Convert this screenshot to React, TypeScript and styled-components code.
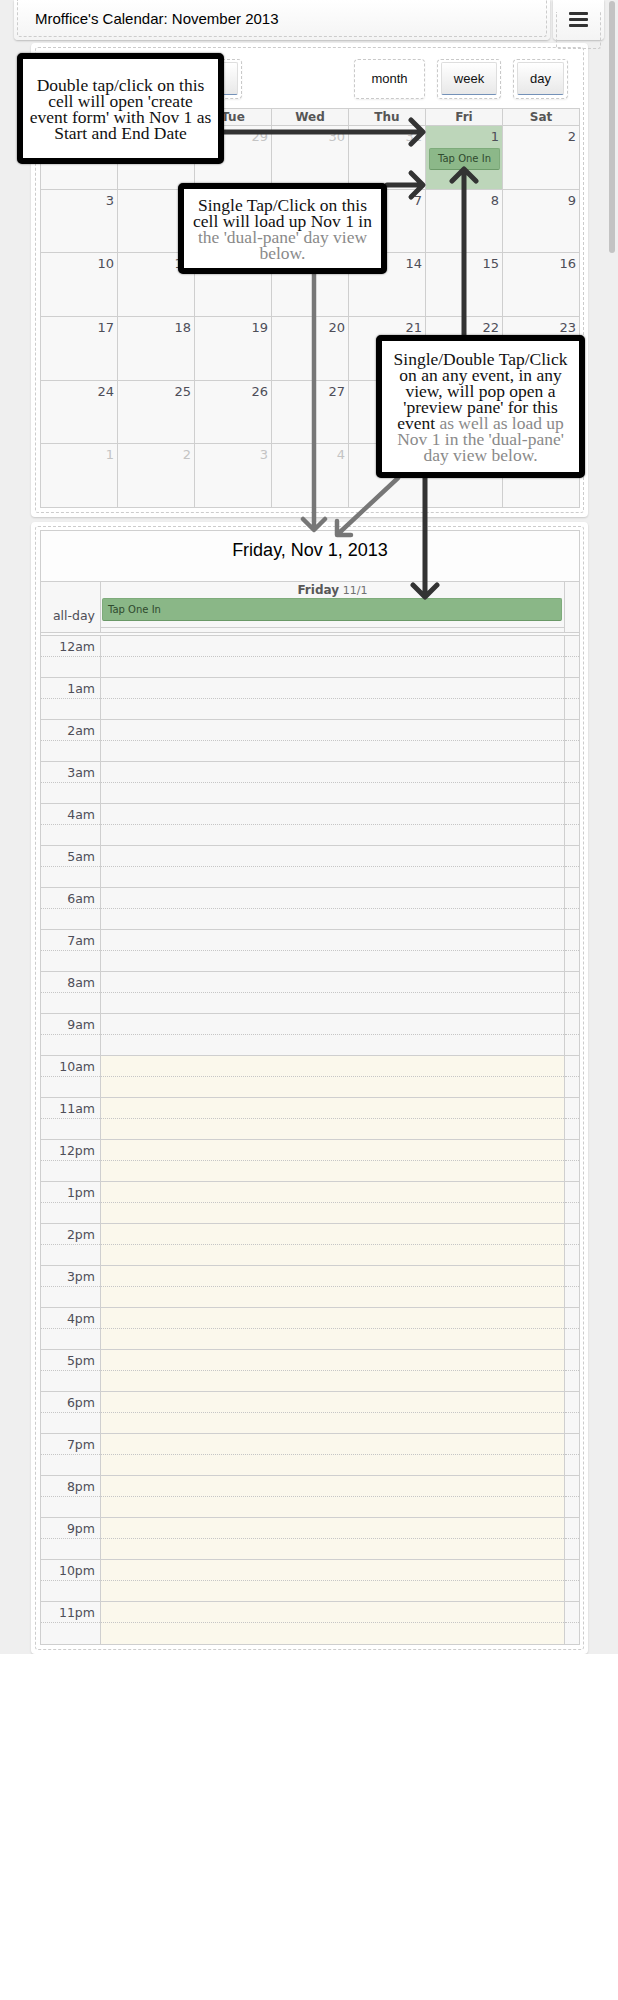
import React from 'react';
import styled, { createGlobalStyle, css } from 'styled-components';

const HOURS = Array.from({ length: 24 }, (_, h) => {
  const n = h % 12 === 0 ? 12 : h % 12;
  return `${n}${h < 12 ? 'am' : 'pm'}`;
});

const WEEKDAYS = ['Sun', 'Mon', 'Tue', 'Wed', 'Thu', 'Fri', 'Sat'];

// 6 weeks, Oct 27 .. Dec 7; index 5 is Nov 1
const MONTH_DAYS = Array.from({ length: 42 }, (_, i) => {
  const n = i - 5;
  if (n < 0) return { label: 27 + i, other: true };
  if (n >= 30) return { label: n - 29, other: true };
  return { label: n + 1, other: false };
});

const GlobalStyle = createGlobalStyle`
  html, body {
    margin: 0;
    padding: 0;
    background: #fff;
  }
  body {
    font-family: 'DejaVu Sans', Verdana, sans-serif;
  }
  * {
    box-sizing: border-box;
  }
`;

const Page = styled.div`
  position: relative;
  display: flex;
  width: 618px;
  background: #efefef;
`;

const Content = styled.main`
  width: 608px;
`;

const ScrollRail = styled.div`
  width: 10px;
  padding: 1px 3px 0 1px;
`;

const ScrollThumb = styled.div`
  height: 252px;
  background: #c3c3c3;
  border-radius: 3px;
`;

const TopBar = styled.div`
  display: flex;
  gap: 3px;
  height: 40px;
  padding-left: 14px;
`;

const Bar = styled.div<{ $width: number }>`
  width: ${({ $width }) => $width}px;
  height: 40px;
  padding: 0 3px 3px;
  background: linear-gradient(#ffffff, #f4f4f4);
  border-radius: 0 0 4px 4px;
  box-shadow: 0 1px 2px rgba(0, 0, 0, 0.22);
`;

const BarInner = styled.div`
  height: 100%;
  border: 1px dashed #cccccc;
  border-top: none;
  border-radius: 0 0 3px 3px;
`;

const Title = styled.h1`
  margin: 0;
  padding: 10px 0 0 17px;
  font: normal 15px/17px 'Liberation Sans', Arial, sans-serif;
  color: #000;
`;

const Burger = styled.div`
  display: flex;
  flex-direction: column;
  gap: 3px;
  width: 19px;
  margin: 12px auto 0;

  span {
    display: block;
    height: 3px;
    border-radius: 1px;
    background: #333;
  }
`;

const Panel = styled.section<{ $top: number }>`
  width: 557px;
  margin: ${({ $top }) => $top}px 0 0 31px;
  padding: 4px;
  background: #fff;
  border-radius: 4px;
  box-shadow: 0 1px 2px rgba(0, 0, 0, 0.16);
`;

const PanelInner = styled.div<{ $padTop: number }>`
  border: 1px dashed #cccccc;
  border-radius: 3px;
  padding: ${({ $padTop }) => $padTop}px 3px 4px 4px;
`;

const Toolbar = styled.div`
  display: flex;
  justify-content: space-between;
  margin-bottom: 9px;
`;

const ButtonGroup = styled.div`
  display: flex;
  gap: 12px;
  padding-right: 12px;
`;

const ToolButton = styled.div<{ $width: number }>`
  width: ${({ $width }) => $width}px;
  height: 40px;
  padding: 2px 3px 3px;
  border: 1px dashed #c9c9c9;
  border-radius: 4px;
  background: #fff;
  box-shadow: 0 1px 2px rgba(0, 0, 0, 0.07);
`;

const ButtonFace = styled.span<{ $active?: boolean }>`
  display: flex;
  align-items: center;
  justify-content: center;
  height: 100%;
  font: 13px 'Liberation Sans', Arial, sans-serif;
  color: #111;

  ${({ $active }) =>
    !$active &&
    css`
      background: linear-gradient(#ffffff, #e8e8e8);
      border: 1px solid #dedede;
      border-bottom: 1px solid #7391b8;
      border-radius: 2px;
    `}
`;

const MonthGrid = styled.div`
  display: grid;
  grid-template-columns: repeat(7, 1fr);
  grid-template-rows: 16px repeat(6, 1fr);
  gap: 1px;
  height: 400px;
  border: 1px solid #cfcfcf;
  background: #cfcfcf;
`;

const WeekdayCell = styled.div`
  background: #f6f6f6;
  text-align: center;
  font-weight: bold;
  font-size: 12px;
  line-height: 16px;
  color: #565656;
`;

const DayCell = styled.div<{ $today?: boolean }>`
  display: flex;
  flex-direction: column;
  background: ${({ $today }) => ($today ? '#bdd6ba' : '#f8f8f8')};
`;

const DayNumber = styled.div<{ $muted?: boolean }>`
  padding: 3px 3px 0 0;
  text-align: right;
  font-size: 13px;
  line-height: 16px;
  color: ${({ $muted }) => ($muted ? '#c4c4c4' : '#4e4e58')};
`;

const MonthEvent = styled.div`
  margin: 3px 2px 0 3px;
  height: 22px;
  background: #8cb889;
  border: 1px solid #7eab7b;
  border-bottom-color: #6c9a69;
  border-radius: 2px;
  font-size: 10px;
  line-height: 20px;
  text-align: center;
  color: #2f4a2e;
`;

const DayTable = styled.div`
  border: 1px solid #cfcfcf;
`;

const DayTitle = styled.div`
  height: 51px;
  padding-top: 9px;
  border-bottom: 1px solid #cfcfcf;
  background: #fdfdfd;
  text-align: center;
  font: 18px/20px 'Liberation Sans', Arial, sans-serif;
  color: #000;
`;

const SlotRow = styled.div<{ $height: number }>`
  display: grid;
  grid-template-columns: 59px 463px 1fr;
  column-gap: 1px;
  height: ${({ $height }) => $height}px;
  background: #cfcfcf;
  border-bottom: 1px solid #cfcfcf;

  &:last-child {
    border-bottom: none;
  }
`;

const Divider = styled.div`
  height: 3px;
  background: #fafafa;
  border-bottom: 1px solid #cfcfcf;
`;

const AxisCell = styled.div<{ $bottom?: boolean }>`
  display: flex;
  flex-direction: column;
  justify-content: ${({ $bottom }) => ($bottom ? 'flex-end' : 'flex-start')};
  padding-bottom: ${({ $bottom }) => ($bottom ? '9px' : '0')};
  background: #f7f7f7;
  text-align: right;
  font-size: 12.5px;
  color: #4e4e58;
`;

const Column = styled.div<{ $warm?: boolean }>`
  display: flex;
  flex-direction: column;
  background: ${({ $warm }) => ($warm ? '#fbf8ec' : '#f7f7f7')};
`;

const Half = styled.div<{ $second?: boolean }>`
  height: 20px;
  ${({ $second }) =>
    $second &&
    css`
      flex: 1;
      border-top: 1px dotted #c6c6c6;
    `}
`;

const HourLabel = styled.span`
  display: block;
  padding: 3px 5px 0 0;
  line-height: 15px;
`;

const DayHead = styled.div`
  height: 16px;
  text-align: center;
  font-size: 12px;
  line-height: 17px;
  color: #585858;

  small {
    font-size: 11px;
    color: #707070;
  }
`;

const AllDayEvent = styled.div`
  height: 23px;
  margin: 0 2px 0 1px;
  padding-left: 5px;
  background: #8ab787;
  border: 1px solid #7eab7b;
  border-bottom-color: #6a9867;
  border-radius: 2px;
  font-size: 10px;
  line-height: 22px;
  color: #2f4a2e;
`;

const AllDayRule = styled.div`
  margin-top: 6px;
  border-top: 1px solid #cfcfcf;
`;

const ArrowLayer = styled.svg`
  position: absolute;
  top: 0;
  left: 0;
  pointer-events: none;
`;

const Callout = styled.div<{ $x: number; $y: number; $w: number; $h: number }>`
  position: absolute;
  left: ${({ $x }) => $x}px;
  top: ${({ $y }) => $y}px;
  width: ${({ $w }) => $w}px;
  height: ${({ $h }) => $h}px;
  display: flex;
  align-items: center;
  justify-content: center;
  border: 6px solid #000;
  border-radius: 5px;
  background: #fff;
  box-shadow: 0 0 2px rgba(0, 0, 0, 0.6);
  text-align: center;
  white-space: nowrap;
  font: 17.5px/16px 'Liberation Serif', Georgia, serif;
  color: #111;
`;

const Muted = styled.span`
  color: #8a8a8a;
`;

const Arrows: React.FC = () => (
  <ArrowLayer width={618} height={620} viewBox='0 0 618 620'>
    <g
      stroke='#333'
      strokeWidth={5}
      fill='none'
      strokeLinecap='round'
      strokeLinejoin='round'
    >
      <path d='M224 132H422M411 120l12 12-12 12' />
      <path d='M387 185H422M411 173l12 12-12 12' />
      <path d='M464 335V171M452 181l12-12 12 12' />
      <path d='M425 478V595M413 585l12 12 12-12' />
    </g>
    <g
      stroke='#777'
      strokeWidth={4.5}
      fill='none'
      strokeLinecap='round'
      strokeLinejoin='round'
    >
      <path d='M314 274V528M303 519l11 11 11-11' />
      <path d='M398 478L339 533M337 521v14h14' />
    </g>
  </ArrowLayer>
);

const App: React.FC = () => {
  return (
    <>
      <GlobalStyle />
      <Page>
        <Content>
          <TopBar>
            <Bar $width={536}>
              <BarInner>
                <Title>Mroffice's Calendar: November 2013</Title>
              </BarInner>
            </Bar>
            <Bar $width={51}>
              <BarInner>
                <Burger>
                  <span />
                  <span />
                  <span />
                </Burger>
              </BarInner>
            </Bar>
          </TopBar>

          <Panel $top={3}>
            <PanelInner $padTop={11}>
              <Toolbar>
                <ButtonGroup>
                  <ToolButton $width={52}>
                    <ButtonFace>‹</ButtonFace>
                  </ToolButton>
                  <ToolButton $width={52}>
                    <ButtonFace>›</ButtonFace>
                  </ToolButton>
                  <ToolButton $width={74}>
                    <ButtonFace>today</ButtonFace>
                  </ToolButton>
                </ButtonGroup>
                <ButtonGroup>
                  <ToolButton $width={71}>
                    <ButtonFace $active>month</ButtonFace>
                  </ToolButton>
                  <ToolButton $width={64}>
                    <ButtonFace>week</ButtonFace>
                  </ToolButton>
                  <ToolButton $width={55}>
                    <ButtonFace>day</ButtonFace>
                  </ToolButton>
                </ButtonGroup>
              </Toolbar>

              <MonthGrid>
                {WEEKDAYS.map((d) => (
                  <WeekdayCell key={d}>{d}</WeekdayCell>
                ))}
                {MONTH_DAYS.map((day, i) => (
                  <DayCell key={i} $today={i === 5}>
                    <DayNumber $muted={day.other}>{day.label}</DayNumber>
                    {i === 5 && <MonthEvent>Tap One In</MonthEvent>}
                  </DayCell>
                ))}
              </MonthGrid>
            </PanelInner>
          </Panel>

          <Panel $top={5}>
            <PanelInner $padTop={3}>
              <DayTable>
                <DayTitle>Friday, Nov 1, 2013</DayTitle>
                <SlotRow $height={51}>
                  <AxisCell $bottom>
                    <HourLabel>all-day</HourLabel>
                  </AxisCell>
                  <Column>
                    <DayHead>
                      <b>Friday</b> <small>11/1</small>
                    </DayHead>
                    <AllDayEvent>Tap One In</AllDayEvent>
                    <AllDayRule />
                  </Column>
                  <Column />
                </SlotRow>
                <Divider />
                {HOURS.map((label, h) => (
                  <SlotRow key={label} $height={42}>
                    <AxisCell>
                      <Half>
                        <HourLabel>{label}</HourLabel>
                      </Half>
                      <Half $second />
                    </AxisCell>
                    <Column $warm={h >= 10}>
                      <Half />
                      <Half $second />
                    </Column>
                    <Column>
                      <Half />
                      <Half $second />
                    </Column>
                  </SlotRow>
                ))}
              </DayTable>
            </PanelInner>
          </Panel>
        </Content>

        <ScrollRail>
          <ScrollThumb />
        </ScrollRail>

        <Arrows />

        <Callout $x={17} $y={53} $w={207} $h={111}>
          <div>
            Double tap/click on this
            <br />
            cell will open 'create
            <br />
            event form' with Nov 1 as
            <br />
            Start and End Date
          </div>
        </Callout>

        <Callout $x={178} $y={183} $w={209} $h={91}>
          <div>
            Single Tap/Click on this
            <br />
            cell will load up Nov 1 in
            <br />
            <Muted>
              the 'dual-pane' day view
              <br />
              below.
            </Muted>
          </div>
        </Callout>

        <Callout $x={376} $y={335} $w={209} $h={143}>
          <div>
            Single/Double Tap/Click
            <br />
            on an any event, in any
            <br />
            view, will pop open a
            <br />
            'preview pane' for this
            <br />
            event{' '}
            <Muted>
              as well as load up
              <br />
              Nov 1 in the 'dual-pane'
              <br />
              day view below.
            </Muted>
          </div>
        </Callout>
      </Page>
    </>
  );
};

export default App;
